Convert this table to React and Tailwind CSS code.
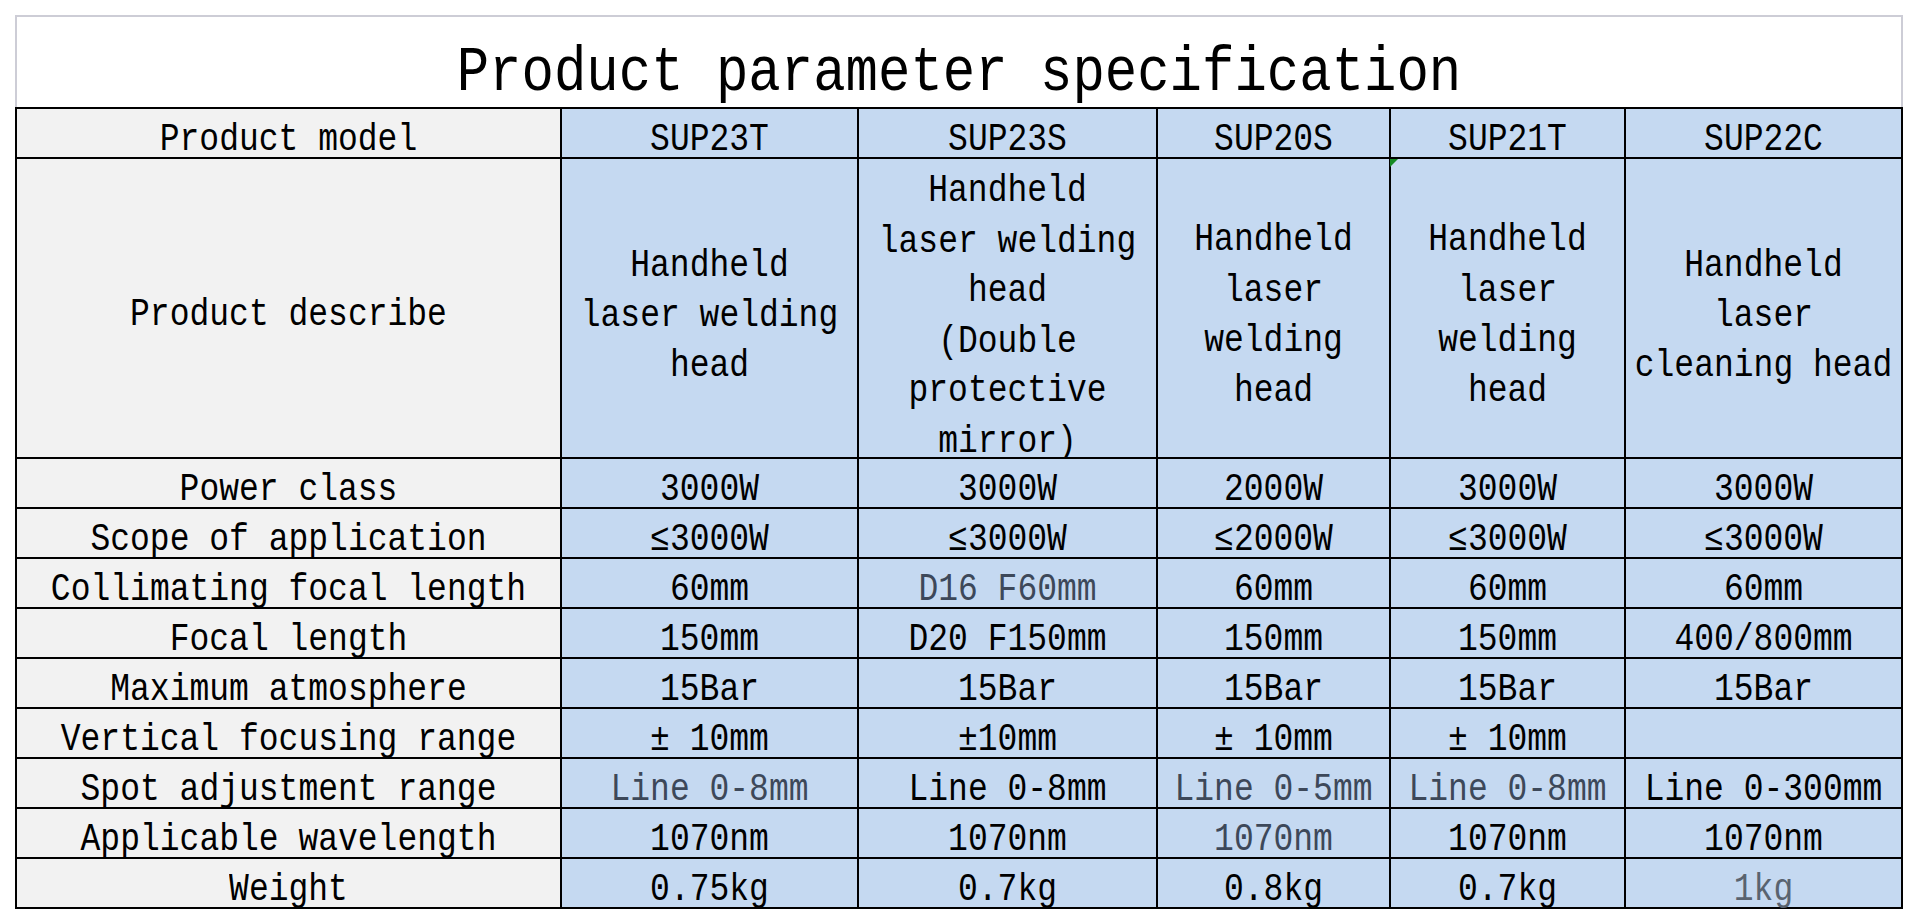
import React from "react";

const models = ["SUP23T", "SUP23S", "SUP20S", "SUP21T", "SUP22C"];

const describe = [
    ["Handheld", "laser welding", "head"],
    ["Handheld", "laser welding", "head", "(Double", "protective", "mirror)"],
    ["Handheld", "laser", "welding", "head"],
    ["Handheld", "laser", "welding", "head"],
    ["Handheld", "laser", "cleaning head"],
];

// tone: "dim" = the slate text some cells were typed in, "faint" = lighter still
const rows = [
    { label: "Power class", values: ["3000W", "3000W", "2000W", "3000W", "3000W"] },
    { label: "Scope of application", values: ["≤3000W", "≤3000W", "≤2000W", "≤3000W", "≤3000W"] },
    {
        label: "Collimating focal length",
        values: ["60mm", { text: "D16 F60mm", tone: "dim" }, "60mm", "60mm", "60mm"],
    },
    { label: "Focal length", values: ["150mm", "D20 F150mm", "150mm", "150mm", "400/800mm"] },
    { label: "Maximum atmosphere", values: ["15Bar", "15Bar", "15Bar", "15Bar", "15Bar"] },
    { label: "Vertical focusing range", values: ["± 10mm", "±10mm", "± 10mm", "± 10mm", ""] },
    {
        label: "Spot adjustment range",
        values: [
            { text: "Line 0-8mm", tone: "dim" },
            "Line 0-8mm",
            { text: "Line 0-5mm", tone: "dim" },
            { text: "Line 0-8mm", tone: "dim" },
            "Line 0-300mm",
        ],
    },
    {
        label: "Applicable wavelength",
        values: ["1070nm", "1070nm", { text: "1070nm", tone: "dim" }, "1070nm", "1070nm"],
    },
    {
        label: "Weight",
        values: ["0.75kg", "0.7kg", "0.8kg", "0.7kg", { text: "1kg", tone: "faint" }],
    },
];

const toneClass = {
    dim: "text-[#3d4859]",
    faint: "text-[#59636f]",
};

const Cell = ({ lines, head, tone, flag }) => (
    <div
        className={`relative flex items-center justify-center pt-[16px] text-center ${
            head ? "bg-[#f2f2f2]" : "bg-[#c5d9f1]"
        } ${tone ? toneClass[tone] : "text-black"}`}
    >
        {flag && (
            <span className="absolute top-0 -left-px w-0 h-0 border-t-[8px] border-r-[8px] border-t-[#168a24] border-r-transparent" />
        )}
        <span className="inline-block scale-y-[1.15] leading-[43.5px] whitespace-nowrap">
            {lines.map((l, i) => (
                <span key={i} className="block">
                    {l}
                </span>
            ))}
        </span>
    </div>
);

const App = () => {
    return (
        <div className="min-h-screen bg-white pt-[15px] pl-[15px] font-['Liberation_Mono',monospace]">
            <div className="w-[1888px]">

                {/* ================= TITLE ================= */}

                <div className="h-[92px] border-t-2 border-x-2 border-[#cdcdd6] pt-[30px] text-center">
                    <span className="inline-block scale-y-[1.15] text-[54px] leading-[54px] text-black">
                        Product parameter specification
                    </span>
                </div>

                {/* ================= TABLE ================= */}

                <div className="grid grid-cols-[543px_295px_297px_231px_233px_275px] grid-rows-[48px_298px_repeat(9,48px)] gap-[2px] bg-black p-[2px] text-[33px]">
                    <Cell head lines={["Product model"]} />
                    {models.map((m) => (
                        <Cell key={m} lines={[m]} />
                    ))}

                    <Cell head lines={["Product describe"]} />
                    {describe.map((d, i) => (
                        <Cell key={i} lines={d} flag={i === 3} />
                    ))}

                    {rows.map((r) => (
                        <React.Fragment key={r.label}>
                            <Cell head lines={[r.label]} />
                            {r.values.map((v, i) => {
                                const text = typeof v === "string" ? v : v.text;
                                const tone = typeof v === "string" ? null : v.tone;
                                return <Cell key={i} lines={[text]} tone={tone} />;
                            })}
                        </React.Fragment>
                    ))}
                </div>
            </div>
        </div>
    );
};

export default App;
